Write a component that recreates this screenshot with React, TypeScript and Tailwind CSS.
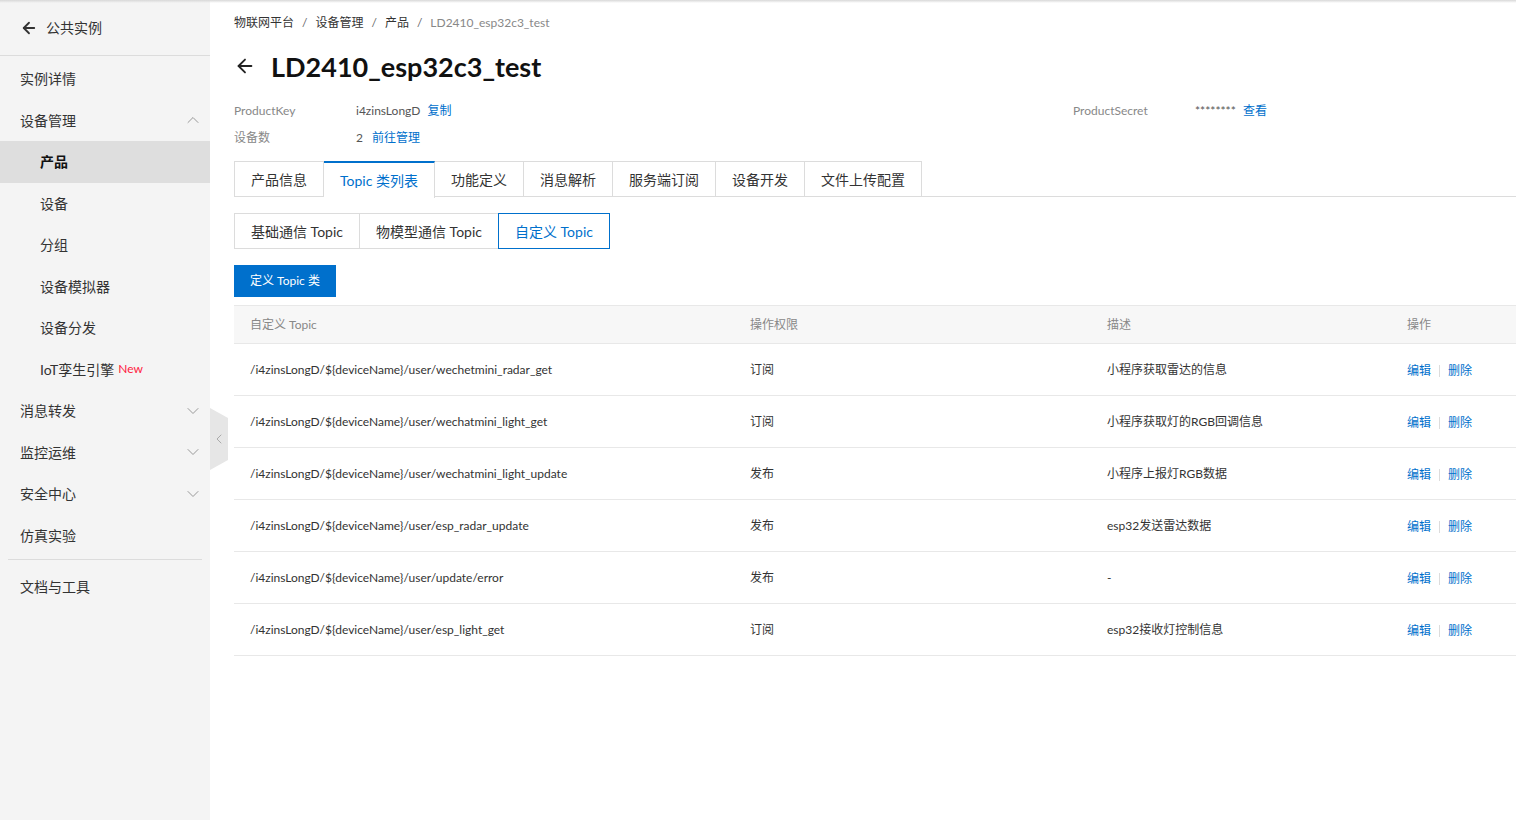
import { ArrowLeft, ChevronUp, ChevronDown, ChevronLeft } from "lucide-react";

const font = { fontFamily: 'Lato, "Noto Sans CJK SC", sans-serif' };

type NavItem = { label: string; sub?: boolean; active?: boolean; chevron?: "up" | "down"; isNew?: boolean };

const nav: NavItem[] = [
  { label: "实例详情" },
  { label: "设备管理", chevron: "up" },
  { label: "产品", sub: true, active: true },
  { label: "设备", sub: true },
  { label: "分组", sub: true },
  { label: "设备模拟器", sub: true },
  { label: "设备分发", sub: true },
  { label: "IoT孪生引擎", sub: true, isNew: true },
  { label: "消息转发", chevron: "down" },
  { label: "监控运维", chevron: "down" },
  { label: "安全中心", chevron: "down" },
  { label: "仿真实验" },
];

const tabs = ["产品信息", "Topic 类列表", "功能定义", "消息解析", "服务端订阅", "设备开发", "文件上传配置"];
const subTabs = ["基础通信 Topic", "物模型通信 Topic", "自定义 Topic"];

const rows = [
  ["/i4zinsLongD/${deviceName}/user/wechetmini_radar_get", "订阅", "小程序获取雷达的信息"],
  ["/i4zinsLongD/${deviceName}/user/wechatmini_light_get", "订阅", "小程序获取灯的RGB回调信息"],
  ["/i4zinsLongD/${deviceName}/user/wechatmini_light_update", "发布", "小程序上报灯RGB数据"],
  ["/i4zinsLongD/${deviceName}/user/esp_radar_update", "发布", "esp32发送雷达数据"],
  ["/i4zinsLongD/${deviceName}/user/update/error", "发布", "-"],
  ["/i4zinsLongD/${deviceName}/user/esp_light_get", "订阅", "esp32接收灯控制信息"],
];

function Sidebar() {
  return (
    <aside className="w-[210px] shrink-0 bg-[#f4f4f4] h-[820px] relative">
      <div className="h-[56px] flex items-center pl-[20px] gap-[8px] border-b border-[#dcdcdc] text-[14px] text-[#333]">
        <ArrowLeft size={18} strokeWidth={2.4} />
        <span>公共实例</span>
      </div>
      <div className="pt-[2px]">
        {nav.map((n) => (
          <div
            key={n.label}
            className={`h-[41.5px] flex items-center justify-between pr-[7px] text-[14px] ${
              n.sub ? "pl-[40px]" : "pl-[20px]"
            } ${n.active ? "bg-[#dedede] font-bold text-[#111]" : "text-[#333]"}`}
          >
            <span className="flex items-center gap-[4px]">
              {n.label}
              {n.isNew && <span className="text-[12px] text-[#ff2040]">New</span>}
            </span>
            {n.chevron === "up" && <ChevronUp size={20} strokeWidth={1.2} className="text-[#999]" />}
            {n.chevron === "down" && <ChevronDown size={20} strokeWidth={1.2} className="text-[#999]" />}
          </div>
        ))}
      </div>
      <div className="mx-[8px] mt-[3px] border-t border-[#dcdcdc]" />
      <div className="h-[52px] flex items-center pl-[20px] text-[14px] text-[#333]">文档与工具</div>
      <div className="absolute left-[210px] top-[408px] w-[18px] h-[62px]">
        <svg width="18" height="62" className="absolute inset-0">
          <polygon points="0,0 18,10 18,52 0,62" fill="#e6e6e6" />
        </svg>
        <ChevronLeft size={16} strokeWidth={1.5} className="absolute left-[1px] top-[23px] text-[#aaa]" />
      </div>
    </aside>
  );
}

export default function App() {
  return (
    <div className="w-[1516px] h-[820px] flex bg-white overflow-hidden relative" style={font}>
      <div className="absolute top-0 left-0 right-0 h-[3px] bg-gradient-to-b from-[#d8d8d8] to-transparent z-10" />
      <Sidebar />
      <main className="flex-1 pl-[24px] pt-[15px]">
        <div className="flex items-center gap-[8px] text-[12px] text-[#333] h-[16px]">
          <span>物联网平台</span>
          <span className="text-[#666]">/</span>
          <span>设备管理</span>
          <span className="text-[#666]">/</span>
          <span>产品</span>
          <span className="text-[#666]">/</span>
          <span className="text-[#888]">LD2410_esp32c3_test</span>
        </div>
        <div className="flex items-center gap-[15px] mt-[18px] h-[34px]">
          <ArrowLeft size={22} strokeWidth={2} className="text-[#222]" />
          <h1 className="text-[27px] font-bold text-[#111] leading-none">LD2410_esp32c3_test</h1>
        </div>
        <div className="mt-[14px] text-[12px]">
          <div className="flex h-[27px] items-center">
            <span className="w-[122px] text-[#888]">ProductKey</span>
            <span className="w-[717px] text-[#555]">
              i4zinsLongD <span className="ml-[4px] text-[#0070cc]">复制</span>
            </span>
            <span className="w-[122px] text-[#888]">ProductSecret</span>
            <span className="text-[#555]">
              ******** <span className="ml-[4px] text-[#0070cc]">查看</span>
            </span>
          </div>
          <div className="flex h-[27px] items-center">
            <span className="w-[122px] text-[#888]">设备数</span>
            <span className="text-[#555]">
              2 <span className="ml-[6px] text-[#0070cc]">前往管理</span>
            </span>
          </div>
        </div>
        <div className="mt-[10px] flex border-b border-[#dcdcdc] h-[36px]">
          {tabs.map((t, i) => (
            <div
              key={t}
              className={`px-[16px] flex items-center text-[14px] border-[#dcdcdc] border-r ${
                i === 0 ? "border-l" : ""
              } ${
                i === 1
                  ? "text-[#0070cc] border-t-2 border-t-[#0070cc] bg-white h-[37px] -mb-px"
                  : "text-[#333] border-t"
              }`}
            >
              {t}
            </div>
          ))}
        </div>
        <div className="mt-[16px] flex h-[36px]">
          {subTabs.map((t, i) => (
            <div
              key={t}
              className={`px-[16px] flex items-center text-[14px] border ${
                i === 2 ? "border-[#0070cc] text-[#0070cc]" : "border-[#dcdcdc] text-[#333]"
              } ${i === 1 ? "border-l-0 border-r-0" : ""}`}
            >
              {t}
            </div>
          ))}
        </div>
        <button className="mt-[16px] h-[32px] px-[16px] bg-[#0070cc] text-white text-[12px]">定义 Topic 类</button>
        <div className="mt-[8px] text-[12px]">
          <div className="grid grid-cols-[500px_357px_300px_1fr] h-[39px] items-center bg-[#f7f7f7] border-t border-b border-[#e8e8e8] text-[#888]">
            <span className="pl-[16px]">自定义 Topic</span>
            <span className="pl-[16px]">操作权限</span>
            <span className="pl-[16px]">描述</span>
            <span className="pl-[16px]">操作</span>
          </div>
          {rows.map((r) => (
            <div
              key={r[0]}
              className="grid grid-cols-[500px_357px_300px_1fr] h-[52px] items-center border-b border-[#e8e8e8] text-[#333]"
            >
              <span className="pl-[16px]">{r[0]}</span>
              <span className="pl-[16px]">{r[1]}</span>
              <span className="pl-[16px]">{r[2]}</span>
              <span className="pl-[16px] pt-[3px] flex items-center text-[#0070cc]">
                编辑
                <span className="mx-[8px] w-px h-[12px] bg-[#dcdcdc]" />
                删除
              </span>
            </div>
          ))}
        </div>
      </main>
    </div>
  );
}
